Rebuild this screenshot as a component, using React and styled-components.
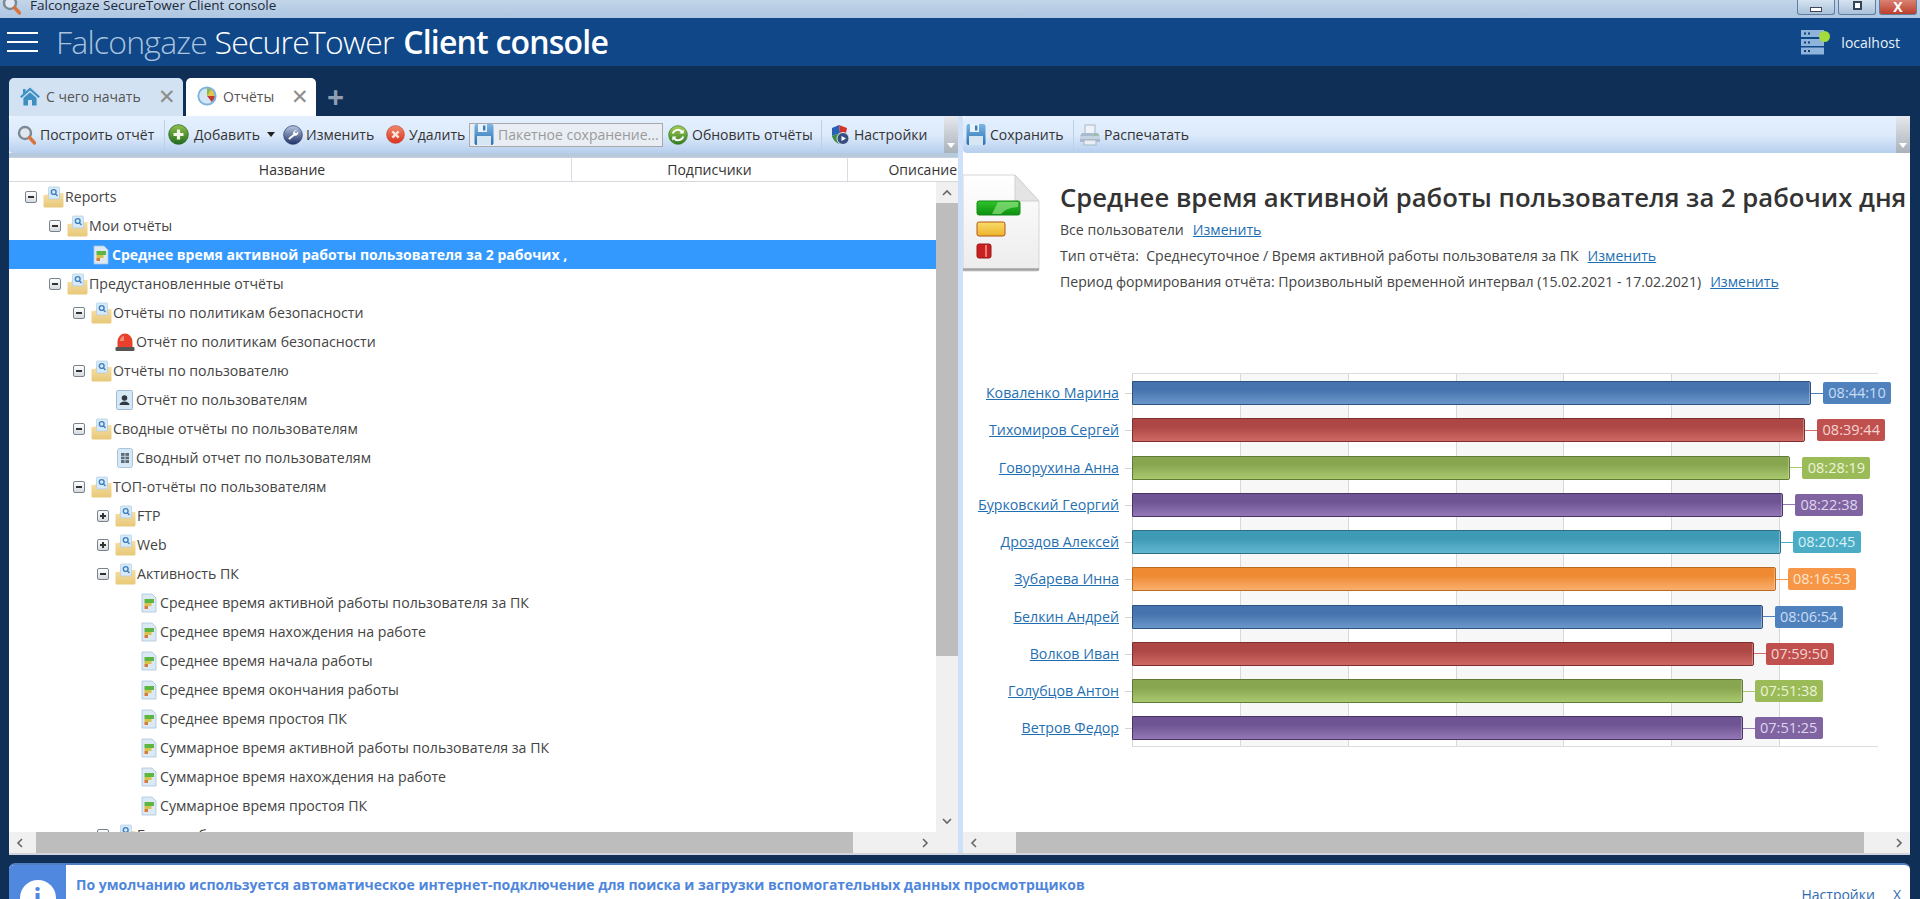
import React from "react";
import styled, { createGlobalStyle } from "styled-components";

const GlobalStyle = createGlobalStyle`
  html, body {
    margin: 0;
    padding: 0;
    background: #0f2f57;
  }
  body {
    font-family: "Open Sans", "Noto Sans", "Liberation Sans", sans-serif;
    color: #444;
  }
  * {
    box-sizing: border-box;
  }
`;

const treeRows = [
  { type: "folder", level: 0, open: true, text: "Reports" },
  { type: "folder", level: 1, open: true, text: "Мои отчёты" },
  { type: "leaf", level: 1, icon: "report", selected: true, text: "Среднее время активной работы пользователя за 2 рабочих ," },
  { type: "folder", level: 1, open: true, text: "Предустановленные отчёты" },
  { type: "folder", level: 2, open: true, text: "Отчёты по политикам безопасности" },
  { type: "leaf", level: 2, icon: "siren", text: "Отчёт по политикам безопасности" },
  { type: "folder", level: 2, open: true, text: "Отчёты по пользователю" },
  { type: "leaf", level: 2, icon: "user", text: "Отчёт по пользователям" },
  { type: "folder", level: 2, open: true, text: "Сводные отчёты по пользователям" },
  { type: "leaf", level: 2, icon: "table", text: "Сводный отчет по пользователям" },
  { type: "folder", level: 2, open: true, text: "ТОП-отчёты по пользователям" },
  { type: "folder", level: 3, text: "FTP" },
  { type: "folder", level: 3, text: "Web" },
  { type: "folder", level: 3, open: true, text: "Активность ПК" },
  { type: "leaf", level: 3, icon: "report", text: "Среднее время активной работы пользователя за ПК" },
  { type: "leaf", level: 3, icon: "report", text: "Среднее время нахождения на работе" },
  { type: "leaf", level: 3, icon: "report", text: "Среднее время начала работы" },
  { type: "leaf", level: 3, icon: "report", text: "Среднее время окончания работы" },
  { type: "leaf", level: 3, icon: "report", text: "Среднее время простоя ПК" },
  { type: "leaf", level: 3, icon: "report", text: "Суммарное время активной работы пользователя за ПК" },
  { type: "leaf", level: 3, icon: "report", text: "Суммарное время нахождения на работе" },
  { type: "leaf", level: 3, icon: "report", text: "Суммарное время простоя ПК" },
  { type: "folder", level: 3, text: "Бизнес-обмен" },
];

const palette = {
  blue: { top: "#4673ad", bottom: "#6b97cb", edge: "#2d5282", label: "#4f81bd", text: "#c9dcf3", line: "#4f81bd" },
  red: { top: "#ac4745", bottom: "#cd6864", edge: "#7d2f2d", label: "#c0504d", text: "#f4d4d3", line: "#d0706d" },
  green: { top: "#88a550", bottom: "#a9c96e", edge: "#5f7a37", label: "#9bbb59", text: "#ecf4d8", line: "#a9c86d" },
  purple: { top: "#6e5493", bottom: "#9478b5", edge: "#483465", label: "#8064a2", text: "#dfd4ec", line: "#9478b5" },
  teal: { top: "#3f9ab6", bottom: "#63b7d0", edge: "#2a6f86", label: "#4bacc6", text: "#d8f0f6", line: "#4bacc6" },
  orange: { top: "#ef8a33", bottom: "#f9af6d", edge: "#b96b24", label: "#f79646", text: "#fde5cf", line: "#f79646" },
};

const people = [
  ["Коваленко Марина", "08:44:10", "blue"],
  ["Тихомиров Сергей", "08:39:44", "red"],
  ["Говорухина Анна", "08:28:19", "green"],
  ["Бурковский Георгий", "08:22:38", "purple"],
  ["Дроздов Алексей", "08:20:45", "teal"],
  ["Зубарева Инна", "08:16:53", "orange"],
  ["Белкин Андрей", "08:06:54", "blue"],
  ["Волков Иван", "07:59:50", "red"],
  ["Голубцов Антон", "07:51:38", "green"],
  ["Ветров Федор", "07:51:25", "purple"],
];

// chart scale, pixels per second of active time
const barWidth = (time) => {
  const [h, m, s] = time.split(":").map(Number);
  return (h * 3600 + m * 60 + s) * 0.02159;
};

const SearchIcon = () => (
  <svg width="19" height="22" viewBox="0 0 19 22">
    <circle cx="8" cy="9" r="6" fill="#dfe8f0" stroke="#7d8894" strokeWidth="2.4" />
    <path d="M12.5 13.5 L17.5 19" stroke="#d9743a" strokeWidth="3.4" strokeLinecap="round" />
  </svg>
);

const RoundIcon = ({ from, to, edge, children, size = 21 }) => (
  <svg width={size} height={size} viewBox="0 0 21 21">
    <defs>
      <linearGradient id={`round-${from.slice(1)}`} x1="0" y1="0" x2="0" y2="1">
        <stop offset="0" stopColor={from} />
        <stop offset="1" stopColor={to} />
      </linearGradient>
    </defs>
    <circle cx="10.5" cy="10.5" r="9.8" fill={`url(#round-${from.slice(1)})`} stroke={edge} strokeWidth="0.8" />
    {children}
  </svg>
);

const AddIcon = () => (
  <RoundIcon from="#8fc14a" to="#1f6b1e" edge="#2c6a22">
    <path d="M10.5 5.5 V15.5 M5.5 10.5 H15.5" stroke="#f4f7e6" strokeWidth="3.2" />
  </RoundIcon>
);

const EditIcon = () => (
  <RoundIcon from="#b9c9e2" to="#1d2f66" edge="#2d3f73" size={20}>
    <path d="M15 5.5 a3.4 3.4 0 0 0 -4.3 4.2 L5.5 14 l1.4 1.6 5-4.4 a3.4 3.4 0 0 0 4.1 -4.4 l-2 1.7 -1.6 -.5 -.2 -1.5 z" fill="#fff" />
  </RoundIcon>
);

const DeleteIcon = () => (
  <RoundIcon from="#f2896c" to="#d8321f" edge="#c8402a" size={19}>
    <path d="M7 7 L14 14 M14 7 L7 14" stroke="#fbe4d8" strokeWidth="2.6" />
  </RoundIcon>
);

const RefreshIcon = () => (
  <RoundIcon from="#a8cf58" to="#2c7a22" edge="#3b7d2a" size={20}>
    <path d="M5 9 a5.6 5.6 0 0 1 10 -1.5 M16 12 a5.6 5.6 0 0 1 -10 1.5" fill="none" stroke="#fff" strokeWidth="2" />
    <path d="M16.5 4.5 V9 H12 Z M4.5 16.5 V12 H9 Z" fill="#fff" />
  </RoundIcon>
);

const SettingsIcon = () => (
  <svg width="20" height="22" viewBox="0 0 20 22">
    <path d="M2 4 L9 1 L10 9 L2 12 Z" fill="#2a62b8" />
    <path d="M9 1 L17 4 L16 9 L10 9 Z" fill="#d4352a" />
    <path d="M2 12 L10 9 L10 20 C6 19 3 16 2 12 Z" fill="#3b8c3b" />
    <circle cx="13" cy="14.5" r="6" fill="#35507f" stroke="#dfe6f2" strokeWidth="1" />
    <path d="M11.5 12 L16 14.5 L11.5 17 Z" fill="#fff" />
  </svg>
);

const FloppyIcon = () => (
  <svg width="20" height="23" viewBox="0 0 20 23">
    <defs>
      <linearGradient id="floppy" x1="0" y1="0" x2="0" y2="1">
        <stop offset="0" stopColor="#7db6e4" />
        <stop offset="1" stopColor="#2b6fae" />
      </linearGradient>
    </defs>
    <rect x="0.5" y="1" width="19" height="21" rx="2" fill="url(#floppy)" />
    <rect x="4" y="1" width="9" height="8" fill="#e9f2fa" />
    <rect x="9" y="2.5" width="2.4" height="5" fill="#3b7db8" />
    <rect x="3" y="13" width="14" height="9" fill="#d7e6f3" />
  </svg>
);

const PrinterIcon = () => (
  <svg width="20" height="22" viewBox="0 0 20 22">
    <rect x="5" y="1" width="10" height="9" fill="#eef3f8" stroke="#a9b7c6" />
    <path d="M2 9 H18 L20 12 V18 H0 V12 Z" fill="#a8bbd0" />
    <rect x="0" y="12" width="20" height="3" fill="#c6d4e2" />
    <rect x="14.5" y="10" width="2.5" height="1.6" fill="#8ecb5f" />
    <rect x="4" y="16" width="12" height="5" fill="#e9eff5" stroke="#a9b7c6" />
  </svg>
);

const HomeIcon = () => (
  <svg width="20" height="20" viewBox="0 0 20 20">
    <path d="M10 1.5 L20 10.5 L18.4 12 L10 4.6 L1.6 12 L0 10.5 L3 7.8 V3 H5.6 V5.5 Z" fill="#3f93c6" />
    <path d="M3.4 12 L10 6.2 L16.6 12 V19.5 H12 V14 H8 V19.5 H3.4 Z" fill="#3d8fc2" />
  </svg>
);

const PieIcon = () => (
  <svg width="20" height="22" viewBox="0 0 20 22">
    <circle cx="10" cy="11" r="9.6" fill="#7fb3dc" />
    <path d="M10 11 V3.4 A7.6 7.6 0 0 1 17.6 11 Z" fill="#e3c650" />
    <path d="M10 11 H17.6 A7.6 7.6 0 0 1 14.6 17 Z" fill="#c93a2e" />
    <path d="M10 3.4 A7.6 7.6 0 0 1 14 4.6 L10 11 Z" fill="#8ab94e" />
    <path d="M10 11 L14.6 17 A7.6 7.6 0 1 1 10 3.4 Z" fill="#d5e6f4" />
  </svg>
);

const FolderIcon = () => (
  <svg width="21" height="22" viewBox="0 0 21 22">
    <defs>
      <linearGradient id="folder" x1="0" y1="0" x2="0" y2="1">
        <stop offset="0" stopColor="#f6dfa4" />
        <stop offset="1" stopColor="#e8c878" />
      </linearGradient>
    </defs>
    <path d="M0.5 9 H4 L5.5 7 H20.5 V20 Q20.500 21.500 19 21.500 H2 Q0.500 21.500 0.500 20 Z" fill="url(#folder)" />
    <rect x="5.5" y="1" width="11" height="12" rx="1" fill="#d8e9f7" stroke="#a6c8e4" strokeWidth="0.6" />
    <circle cx="10.700" cy="6" r="2.400" fill="none" stroke="#3f80c0" strokeWidth="1.400" />
    <path d="M12.500 8 L14.500 10" stroke="#3f80c0" strokeWidth="1.400" />
  </svg>
);

const ReportIcon = () => (
  <svg width="16" height="20" viewBox="0 0 16 20">
    <path d="M1 1 H11 L15 5 V19 H1 Z" fill="#dbe9f5" stroke="#a8c4dc" strokeWidth="0.8" />
    <rect x="3.5" y="6" width="9.500" height="4" fill="#5fb542" />
    <rect x="3.5" y="10" width="7" height="3" fill="#d8c24b" />
    <rect x="3.5" y="13" width="3.5" height="3" fill="#d9793a" />
  </svg>
);

const SirenIcon = () => (
  <svg width="20" height="20" viewBox="0 0 20 20">
    <path d="M2.500 15 V10 A7.500 8.500 0 0 1 17.500 10 V15 Z" fill="#e8402c" />
    <path d="M5 9 A5 5 0 0 1 9 4 V9 Z" fill="#f08a72" />
    <rect x="0.500" y="15" width="19" height="4" rx="1" fill="#555" />
  </svg>
);

const UserDocIcon = () => (
  <svg width="17" height="20" viewBox="0 0 17 20">
    <rect x="0.5" y="0.5" width="16" height="19" rx="1" fill="#d6e8f6" stroke="#9fbcd5" />
    <circle cx="8.5" cy="8" r="2.8" fill="#2f3a45" />
    <path d="M3.5 15 Q4 11.5 8.5 11.5 Q13 11.5 13.5 15 Z" fill="#2f3a45" />
  </svg>
);

const TableDocIcon = () => (
  <svg width="16" height="20" viewBox="0 0 16 20">
    <rect x="0.5" y="0.5" width="15" height="19" rx="2" fill="#d6e8f6" stroke="#a9c6de" />
    <rect x="4" y="5" width="8" height="10" fill="#5d6b78" />
    <path d="M4 8.3 H12 M4 11.6 H12 M8 5 V15" stroke="#d6e8f6" strokeWidth="0.8" />
  </svg>
);

const leafIcons = {
  report: ReportIcon,
  siren: SirenIcon,
  user: UserDocIcon,
  table: TableDocIcon,
};

const ServerIcon = () => (
  <svg width="32" height="26" viewBox="0 0 32 26">
    <g fill="#8fb4dc">
      <rect x="0" y="1" width="23" height="7" />
      <rect x="0" y="10" width="23" height="7" />
      <rect x="0" y="18.500" width="23" height="7" />
    </g>
    <g fill="#123f78">
      <rect x="3" y="3.500" width="2" height="2" />
      <rect x="7" y="3.500" width="2" height="2" />
      <rect x="3" y="12.500" width="2" height="2" />
      <rect x="7" y="12.500" width="2" height="2" />
      <rect x="3" y="21" width="2" height="2" />
      <rect x="7" y="21" width="2" height="2" />
    </g>
    <circle cx="23.500" cy="7.500" r="5.500" fill="#a3dc3c" />
  </svg>
);

const ReportDocIcon = () => (
  <svg width="77" height="98" viewBox="0 0 77 98">
    <defs>
      <linearGradient id="docPage" x1="0" y1="0" x2="0" y2="1">
        <stop offset="0" stopColor="#ffffff" />
        <stop offset="1" stopColor="#ececec" />
      </linearGradient>
      <linearGradient id="docGreen" x1="0" y1="0" x2="0" y2="1">
        <stop offset="0" stopColor="#2fc52a" />
        <stop offset="1" stopColor="#0d8f10" />
      </linearGradient>
      <linearGradient id="docYellow" x1="0" y1="0" x2="0" y2="1">
        <stop offset="0" stopColor="#f8dd6a" />
        <stop offset="1" stopColor="#eeb22a" />
      </linearGradient>
    </defs>
    <path d="M0 1 H52 L76 27 V95 Q76 97 74 97 H0 Z" fill="url(#docPage)" stroke="#d5d5d5" />
    <path d="M0 95.500 H76" stroke="#a3a3a3" strokeWidth="2.500" />
    <path d="M52 1 V27 H76 Z" fill="#e4e4e4" stroke="#d0d0d0" />
    <rect x="14" y="27" width="43" height="14" rx="2" fill="url(#docGreen)" stroke="#158a16" />
    <path d="M29 40 L35 28 H55 V33 Q42 34 38 40 Z" fill="#8fe07f" opacity="0.7" />
    <rect x="14" y="48" width="28" height="14" rx="2" fill="url(#docYellow)" stroke="#b5561a" />
    <rect x="14" y="70" width="14" height="14" rx="2" fill="#c92020" stroke="#9c1616" />
    <rect x="22" y="71" width="2" height="12" fill="#ec7b7b" />
  </svg>
);

const Page = styled.div`
  width: 1920px;
  height: 899px;
  overflow: hidden;
  display: flex;
  flex-direction: column;
  background: #0f2f57;
`;

const TitleBar = styled.div`
  height: 18px;
  flex: none;
  display: flex;
  align-items: flex-end;
  justify-content: space-between;
  overflow: hidden;
  padding: 0 3px 0 0;
  background: linear-gradient(#c3d5e8, #adc6e2);
`;

const TitleText = styled.div`
  display: flex;
  align-items: center;
  gap: 9px;
  height: 24px;
  padding: 0 0 3px 2px;
  font-size: 13.500px;
  line-height: 18px;
  color: #1c2a3a;
`;

const WindowButtons = styled.div`
  display: flex;
  gap: 3px;
  align-self: flex-start;
`;

const WindowButton = styled.div`
  width: 38px;
  height: 15px;
  display: flex;
  align-items: center;
  justify-content: center;
  border: 1px solid #5f7e9e;
  border-top: none;
  border-radius: 0 0 3px 3px;
  background: ${(p) => (p.$close ? "linear-gradient(#d98273, #bc3f2c)" : "linear-gradient(#d6e3f0, #a9c1da)")};
  color: #fff;
  font-size: 14px;
  font-weight: 700;
  line-height: 1;
`;

const MinGlyph = styled.span`
  display: block;
  width: 12px;
  height: 5px;
  margin-top: 4px;
  background: #fff;
  border: 1px solid #445;
`;

const RestoreGlyph = styled.span`
  display: block;
  width: 9px;
  height: 9px;
  background: #fff;
  border: 2px solid #345;
  margin-top: -4px;
`;

const AppHeader = styled.header`
  height: 48px;
  flex: none;
  display: flex;
  align-items: center;
  background: #0f4788;
  padding: 0 20px 0 7px;
`;

const Burger = styled.div`
  width: 31px;
  height: 20px;
  margin-right: 18px;
  display: flex;
  flex-direction: column;
  justify-content: space-between;

  span {
    display: block;
    height: 2px;
    background: #fff;
  }
`;

const Brand = styled.div`
  font-size: 32px;
  line-height: 48px;
  font-weight: 300;
  color: #fff;
  letter-spacing: -0.8px;
  white-space: nowrap;

  em {
    font-style: normal;
    color: #a9c3df;
  }

  b {
    font-weight: 600;
    margin-left: 2px;
  }
`;

const Host = styled.div`
  margin-left: auto;
  display: flex;
  align-items: center;
  gap: 8px;
  color: #e8f0f8;
  font-size: 14px;
`;

const Workspace = styled.main`
  flex: none;
  padding: 12px 10px 0 9px;
`;

const TabStrip = styled.div`
  height: 38px;
  display: flex;
  gap: 3px;
  align-items: stretch;
`;

const Tab = styled.div`
  width: ${(p) => p.$w}px;
  display: flex;
  align-items: center;
  padding: 0 7px 2px 11px;
  gap: 6px;
  border-radius: 5px 5px 0 0;
  background: ${(p) => (p.$active ? "#fff" : "#d3e2f2")};
  color: #555;
  font-size: 14px;
  white-space: nowrap;
`;

const TabClose = styled.span`
  margin-left: auto;
  color: #8d8d8d;
  font-size: 21px;
  line-height: 1;
`;

const TabAdd = styled.div`
  margin-left: 8px;
  align-self: center;
  color: #8f9eb0;
  font-size: 30px;
  font-weight: 700;
  line-height: 1;
`;

const Panes = styled.div`
  height: 739px;
  display: flex;
  background: #dbe8f8;
  border-bottom: 2px solid #cfd6de;
`;

const Pane = styled.section`
  width: ${(p) => p.$w}px;
  flex: none;
  display: flex;
  flex-direction: column;
  background: #fff;
`;

const Toolbar = styled.div`
  height: 37px;
  flex: none;
  display: flex;
  align-items: center;
  position: relative;
  padding-left: ${(p) => p.$pad}px;
  border-radius: 4px 0 0 4px;
  background: linear-gradient(#e4f0fe 0%, #dceafb 52%, #b6cfee 100%);
  font-size: 14px;
  color: #333;
`;

const ToolButton = styled.div`
  width: ${(p) => p.$w}px;
  flex: none;
  display: flex;
  align-items: center;
  gap: ${(p) => p.$gap || 4}px;
  padding-left: ${(p) => p.$pl || 0}px;
  white-space: nowrap;
`;

const Caret = styled.span`
  width: 0;
  height: 0;
  margin-left: 2px;
  border-left: 4px solid transparent;
  border-right: 4px solid transparent;
  border-top: 5px solid #222;
`;

const ToolSep = styled.span`
  width: 1px;
  height: 30px;
  flex: none;
  background: #bcd0e6;
`;

const SaveAllBox = styled.div`
  width: 194px;
  height: 24px;
  flex: none;
  display: flex;
  align-items: center;
  gap: 4px;
  padding-left: 4px;
  border: 1px solid #a9a9a9;
  background: #e9eef4;
  color: #9a9a9a;
  white-space: nowrap;
`;

const Grip = styled.div`
  position: absolute;
  top: 0;
  right: 0;
  bottom: 0;
  width: 14px;
  background: linear-gradient(#e6e9ed, #a9b1ba);

  &::after {
    content: "";
    position: absolute;
    right: 3px;
    bottom: 5px;
    width: 0;
    height: 0;
    border-left: 4px solid transparent;
    border-right: 4px solid transparent;
    border-top: 5px solid #fff;
  }
`;

const ColumnHeader = styled.div`
  height: 25px;
  flex: none;
  margin-top: 4px;
  display: flex;
  border-top: 1px solid #c4d0dc;
  border-bottom: 1px solid #d5d9dd;
  font-size: 14px;
  line-height: 23px;
  color: #333;
  box-shadow: 0 -4px 0 #b7c9dc;
`;

const ColumnTitle = styled.div`
  width: ${(p) => p.$w}px;
  flex: none;
  overflow: hidden;
  white-space: nowrap;
  text-align: ${(p) => p.$align || "center"};
  padding: 0 ${(p) => p.$pr || 0}px 0 ${(p) => p.$pl || 0}px;
  border-right: ${(p) => (p.$last ? "none" : "1px solid #d9dde2")};
`;

const TreeArea = styled.div`
  flex: 1;
  min-height: 0;
  display: flex;
`;

const Tree = styled.div`
  flex: 1;
  min-width: 0;
  overflow: hidden;
`;

const TreeRow = styled.div`
  height: 29px;
  display: flex;
  align-items: center;
  padding-left: ${(p) => p.$pad}px;
  background: ${(p) => (p.$selected ? "#3399ff" : "transparent")};
  color: ${(p) => (p.$selected ? "#fff" : "#444")};
  font-size: ${(p) => (p.$selected ? 14 : 14.15)}px;
  font-weight: ${(p) => (p.$selected ? 700 : 400)};
  white-space: nowrap;
`;

const Expander = styled.span`
  width: 12px;
  height: 12px;
  flex: none;
  margin-right: 6px;
  position: relative;
  border: 1px solid #77838f;
  border-radius: 2px;
  background: linear-gradient(#fff, #d6dade);

  &::before {
    content: "";
    position: absolute;
    left: 2px;
    right: 2px;
    top: 4px;
    height: 2px;
    background: #333;
  }

  &::after {
    content: "";
    display: ${(p) => (p.$open ? "none" : "block")};
    position: absolute;
    top: 2px;
    bottom: 2px;
    left: 4px;
    width: 2px;
    background: #333;
  }
`;

const RowIcon = styled.span`
  width: 21px;
  height: 22px;
  flex: none;
  margin-right: 1px;
  display: flex;
  align-items: center;
  justify-content: center;
`;

const VScroll = styled.div`
  width: 22px;
  flex: none;
  display: flex;
  flex-direction: column;
  background: #f0f0f0;
`;

const HScroll = styled.div`
  height: 21px;
  flex: none;
  display: flex;
  background: #f0f0f0;
`;

const ScrollThumb = styled.div`
  background: #bdbdbd;
  flex: none;
  ${(p) => p.$w && `width: ${p.$w}px;`}
  ${(p) => p.$h && `height: ${p.$h}px;`}
`;

const ScrollArrow = styled.div`
  flex: ${(p) => (p.$grow ? 1 : "none")};
  ${(p) => p.$w && `width: ${p.$w}px;`}
  ${(p) => p.$h && `height: ${p.$h}px;`}
  display: flex;
  align-items: ${(p) => p.$align || "center"};
  justify-content: ${(p) => p.$justify || "center"};
  padding: 0 6px ${(p) => p.$pb || 0}px;
  color: #666;
`;

const Splitter = styled.div`
  width: 5px;
  flex: none;
  background: #cfe1f8;
`;

const ReportBody = styled.div`
  flex: 1;
  min-height: 0;
  overflow: hidden;
  display: flex;
  flex-direction: column;
`;

const ReportHead = styled.div`
  display: flex;
  align-items: flex-start;
  gap: 20px;
  padding-top: 21px;
  flex: none;
`;

const DocSlot = styled.div`
  width: 77px;
  height: 98px;
  flex: none;
`;

const ReportInfo = styled.div`
  padding-top: 7px;
  font-size: 14.100px;
  color: #444;
  white-space: nowrap;
`;

const ReportTitle = styled.h1`
  margin: 0 0 2px;
  font-size: 25.700px;
  line-height: 34px;
  font-weight: 600;
  color: #333;
`;

const InfoLine = styled.div`
  height: 26px;
  line-height: 26px;
  display: flex;
  gap: 9px;
`;

const LinkText = styled.a`
  color: #1f6fb2;
  text-decoration: underline;
`;

const Chart = styled.div`
  margin-top: 78px;
  display: flex;
  flex: none;
`;

const NameColumn = styled.div`
  width: 169px;
  flex: none;
  padding: 8px 0 6px;
  display: flex;
  flex-direction: column;
  gap: 13.250px;
  font-size: 14.200px;
`;

const NameCell = styled.div`
  height: 24px;
  line-height: 24px;
  text-align: right;
  padding-right: 13px;
  position: relative;

  &::after {
    content: "";
    position: absolute;
    right: 0;
    top: 12px;
    width: 7px;
    height: 1px;
    background: #d5d5d5;
  }
`;

const Plot = styled.div`
  width: 746px;
  flex: none;
  padding: 7px 0 6px;
  display: flex;
  flex-direction: column;
  gap: 13.250px;
  border-top: 1px solid #dcdcdc;
  border-bottom: 1px solid #dcdcdc;
  background: repeating-linear-gradient(
    90deg,
    #d8d8d8 0 1px,
    #fff 1px 107.850px,
    #d8d8d8 107.850px 108.850px,
    #f7f7f7 108.850px 215.700px
  );
`;

const BarRow = styled.div`
  height: 24px;
  display: flex;
  align-items: center;
`;

const Bar = styled.div`
  height: 24px;
  flex: none;
  border: 1px solid ${(p) => palette[p.$color].edge};
  border-radius: 0 2px 2px 0;
  background: linear-gradient(${(p) => palette[p.$color].top} 35%, ${(p) => palette[p.$color].bottom} 100%);
  box-shadow: inset -1px 0 0 rgba(255, 255, 255, 0.3);
`;

const Connector = styled.span`
  width: 12px;
  height: 1px;
  flex: none;
  background: ${(p) => palette[p.$color].line};
`;

const BarLabel = styled.span`
  width: 68px;
  height: 22px;
  flex: none;
  border-radius: 2px;
  text-align: center;
  line-height: 22px;
  font-size: 14.500px;
  background: ${(p) => palette[p.$color].label};
  color: ${(p) => palette[p.$color].text};
`;

const InfoBar = styled.aside`
  margin: 8px 10px 0 9px;
  flex: 1;
  min-height: 0;
  display: flex;
  background: #fff;
  border-top: 2px solid #4f7fc0;
  border-radius: 6px 6px 0 0;
  overflow: hidden;
`;

const InfoBadge = styled.div`
  width: 57px;
  flex: none;
  background: #5088e0;
  display: flex;
  justify-content: center;
  padding-top: 15px;
`;

const InfoCircle = styled.div`
  width: 36px;
  height: 36px;
  flex: none;
  border-radius: 50%;
  background: #fff;
  color: #5088e0;
  text-align: center;
  font-size: 26px;
  font-weight: 700;
  line-height: 36px;
`;

const InfoText = styled.div`
  padding: 10px 0 0 10px;
  color: #4f86dc;
  font-size: 14px;
  line-height: 20px;
  font-weight: 700;
  white-space: nowrap;
`;

const InfoActions = styled.div`
  margin-left: auto;
  padding: 20px 9px 0 0;
  display: flex;
  gap: 18px;
  color: #2f6ab0;
  font-size: 14px;
  line-height: 20px;
`;

const Arrow = ({ d }) => (
  <svg width="10" height="10" viewBox="0 0 10 10">
    <path d={d} fill="none" stroke="#666" strokeWidth="1.600" />
  </svg>
);

const App = () => {
  return (
    <Page>
      <GlobalStyle />
      <TitleBar>
        <TitleText>
          <SearchIcon />
          Falcongaze SecureTower Client console
        </TitleText>
        <WindowButtons>
          <WindowButton><MinGlyph /></WindowButton>
          <WindowButton><RestoreGlyph /></WindowButton>
          <WindowButton $close>X</WindowButton>
        </WindowButtons>
      </TitleBar>

      <AppHeader>
        <Burger><span /><span /><span /></Burger>
        <Brand><em>Falcongaze</em> SecureTower <b>Client console</b></Brand>
        <Host><ServerIcon />localhost</Host>
      </AppHeader>

      <Workspace>
        <TabStrip>
          <Tab $w={174}><HomeIcon />С чего начать<TabClose>✕</TabClose></Tab>
          <Tab $w={130} $active><PieIcon />Отчёты<TabClose>✕</TabClose></Tab>
          <TabAdd>+</TabAdd>
        </TabStrip>

        <Panes>
          <Pane $w={949}>
            <Toolbar $pad={8}>
              <ToolButton $w={147}><SearchIcon />Построить отчёт</ToolButton>
              <ToolSep />
              <ToolButton $w={118} $pl={3} $gap={5}><AddIcon />Добавить<Caret /></ToolButton>
              <ToolButton $w={103} $gap={3}><EditIcon />Изменить</ToolButton>
              <ToolButton $w={83} $gap={4}><DeleteIcon />Удалить</ToolButton>
              <SaveAllBox><FloppyIcon />Пакетное сохранение...</SaveAllBox>
              <ToolButton $w={158} $pl={5}><RefreshIcon />Обновить отчёты</ToolButton>
              <ToolSep />
              <ToolButton $w={110} $pl={8}><SettingsIcon />Настройки</ToolButton>
              <Grip />
            </Toolbar>
            <ColumnHeader>
              <ColumnTitle $w={563} $pl={4}>Название</ColumnTitle>
              <ColumnTitle $w={276}>Подписчики</ColumnTitle>
              <ColumnTitle $w={110} $align="right" $pr={1} $last>Описание</ColumnTitle>
            </ColumnHeader>
            <TreeArea>
              <Tree>
                {treeRows.map((row) => {
                  if (row.type === "folder") {
                    return (
                      <TreeRow key={row.text} $pad={16 + row.level * 24}>
                        <Expander $open={row.open} />
                        <RowIcon><FolderIcon /></RowIcon>
                        {row.text}
                      </TreeRow>
                    );
                  }
                  const Icon = leafIcons[row.icon];
                  return (
                    <TreeRow key={row.text} $pad={57 + row.level * 24} $selected={row.selected}>
                      <RowIcon><Icon /></RowIcon>
                      {row.text}
                    </TreeRow>
                  );
                })}
              </Tree>
              <VScroll>
                <ScrollArrow $h={21}><Arrow d="M1 7 L5 3 L9 7" /></ScrollArrow>
                <ScrollThumb $h={453} />
                <ScrollArrow $grow $align="flex-end" $pb={6}><Arrow d="M1 3 L5 7 L9 3" /></ScrollArrow>
              </VScroll>
            </TreeArea>
            <HScroll>
              <ScrollArrow $w={27} $justify="flex-start"><Arrow d="M7 1 L3 5 L7 9" /></ScrollArrow>
              <ScrollThumb $w={817} />
              <ScrollArrow $grow $justify="flex-end"><Arrow d="M3 1 L7 5 L3 9" /></ScrollArrow>
              <ScrollArrow $w={22} />
            </HScroll>
          </Pane>

          <Splitter />

          <Pane $w={947}>
            <Toolbar $pad={3}>
              <ToolButton $w={107}><FloppyIcon />Сохранить</ToolButton>
              <ToolSep />
              <ToolButton $w={120} $pl={6}><PrinterIcon />Распечатать</ToolButton>
              <Grip />
            </Toolbar>
            <ReportBody>
              <ReportHead>
                <DocSlot><ReportDocIcon /></DocSlot>
                <ReportInfo>
                  <ReportTitle>Среднее время активной работы пользователя за 2 рабочих дня</ReportTitle>
                  <InfoLine>Все пользователи <LinkText>Изменить</LinkText></InfoLine>
                  <InfoLine>Тип отчёта:&nbsp; Среднесуточное / Время активной работы пользователя за ПК <LinkText>Изменить</LinkText></InfoLine>
                  <InfoLine>Период формирования отчёта: Произвольный временной интервал (15.02.2021 - 17.02.2021) <LinkText>Изменить</LinkText></InfoLine>
                </ReportInfo>
              </ReportHead>
              <Chart>
                <NameColumn>
                  {people.map(([name]) => (
                    <NameCell key={name}><LinkText>{name}</LinkText></NameCell>
                  ))}
                </NameColumn>
                <Plot>
                  {people.map(([name, time, color]) => (
                    <BarRow key={name}>
                      <Bar $color={color} style={{ width: barWidth(time) }} />
                      <Connector $color={color} />
                      <BarLabel $color={color}>{time}</BarLabel>
                    </BarRow>
                  ))}
                </Plot>
              </Chart>
            </ReportBody>
            <HScroll>
              <ScrollArrow $w={53} $justify="flex-start"><Arrow d="M7 1 L3 5 L7 9" /></ScrollArrow>
              <ScrollThumb $w={848} />
              <ScrollArrow $grow $justify="flex-end"><Arrow d="M3 1 L7 5 L3 9" /></ScrollArrow>
            </HScroll>
          </Pane>
        </Panes>
      </Workspace>

      <InfoBar>
        <InfoBadge><InfoCircle>i</InfoCircle></InfoBadge>
        <InfoText>По умолчанию используется автоматическое интернет-подключение для поиска и загрузки вспомогательных данных просмотрщиков</InfoText>
        <InfoActions>
          <span>Настройки</span>
          <span>X</span>
        </InfoActions>
      </InfoBar>
    </Page>
  );
};

export default App;
